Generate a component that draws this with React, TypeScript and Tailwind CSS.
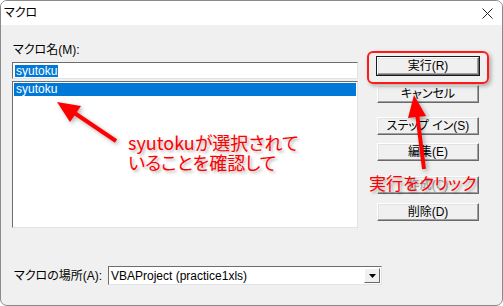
const ui = '[font-family:"Liberation_Sans","Noto_Sans_CJK_JP",sans-serif]';

function WinButton({ label, isDefault, disabled }: { label: string; isDefault?: boolean; disabled?: boolean }) {
  return (
    <div
      className={`h-[18px] w-full flex items-center justify-center bg-[#f0f0f0] border border-t-white border-l-white border-r-[#696969] border-b-[#696969] shadow-[inset_-1px_-1px_0_#a0a0a0,inset_1px_1px_0_#e3e3e3] text-[12px] leading-none [font-feature-settings:"palt"] ${isDefault ? 'outline outline-[#1a1a1a]' : ''} ${disabled ? 'text-[#a0a0a0]' : 'text-black'}`}
    >
      {label}
    </div>
  );
}

export default function App() {
  return (
    <div className={`relative w-[503px] h-[306px] overflow-hidden bg-[#f0f0f0] border border-[#8a8a8a] rounded-[7px] ${ui}`}>
      {/* title bar */}
      <div className="h-[24px] bg-white flex items-center justify-between pl-[3px] pr-[9px]">
        <span className="text-[12px] text-black [font-feature-settings:'palt']">マクロ</span>
        <svg width="11" height="11" viewBox="0 0 11 11">
          <path d="M0.5 0.5 L10.5 10.5 M10.5 0.5 L0.5 10.5" stroke="#222" strokeWidth="1" />
        </svg>
      </div>

      <div className="flex px-[11px]">
        {/* left column */}
        <div className="w-[346px] flex flex-col pt-[18px]">
          <div className="text-[12px] leading-[14px] text-black [font-feature-settings:'palt'] pl-[1px]">マクロ名(M):</div>
          <div className="mt-[5px] h-[17px] bg-white border border-t-[#6d6d6d] border-l-[#6d6d6d] border-r-[#e3e3e3] border-b-[#e3e3e3] flex items-center pl-[2px]">
            <span className="bg-[#0078d7] text-white text-[12px] leading-[12px] px-[1px]">syutoku</span>
          </div>
          <div className="mt-[2px] h-[147px] bg-white border border-t-[#6d6d6d] border-l-[#6d6d6d] border-r-[#e3e3e3] border-b-[#e3e3e3] p-[1px]">
            <div className="h-[13px] bg-[#0078d7] text-white text-[12px] leading-[13px] pl-[2px]">syutoku</div>
          </div>
        </div>

        {/* right column */}
        <div className="ml-[19px] w-[102px] flex flex-col pt-[32px]">
          <WinButton label="実行(R)" isDefault />
          <div className="mt-[10px]"><WinButton label="キャンセル" /></div>
          <div className="mt-[14px]"><WinButton label="ステップ イン(S)" /></div>
          <div className="mt-[8px]"><WinButton label="編集(E)" /></div>
          <div className="mt-[15px]"><WinButton label="作成(C)" disabled /></div>
          <div className="mt-[9px]"><WinButton label="削除(D)" /></div>
        </div>
      </div>

      {/* bottom row */}
      <div className="flex items-center mt-[38px] pl-[13px]">
        <div className="w-[94px] text-[12px] text-black [font-feature-settings:'palt']">マクロの場所(A):</div>
        <div className="w-[274px] h-[19px] bg-white border border-t-[#6d6d6d] border-l-[#6d6d6d] border-r-[#e3e3e3] border-b-[#e3e3e3] flex items-center justify-between pl-[2px] pr-[1px]">
          <span className="text-[12px] text-black">VBAProject (practice1xls)</span>
          <div className="w-[16px] h-[15px] bg-[#f0f0f0] border border-t-white border-l-white border-r-[#696969] border-b-[#696969] flex items-center justify-center">
            <svg width="7" height="4" viewBox="0 0 7 4"><path d="M0 0 H7 L3.5 4 Z" fill="#000" /></svg>
          </div>
        </div>
      </div>

      {/* annotations */}
      <div className="absolute left-[366px] top-[50px] w-[122px] h-[33px] border-2 border-[#ff1a1a] rounded-[6px] shadow-[2px_2px_4px_rgba(0,0,0,0.3)]" />
      <svg className="absolute left-0 top-0 [filter:drop-shadow(2px_2px_2px_rgba(0,0,0,0.3))]" width="503" height="306" viewBox="0 0 503 306">
        <line x1="115" y1="140" x2="72" y2="111" stroke="#ff0000" strokeWidth="4" />
        <path d="M56 101 L80 105 L69 121 Z" fill="#ff0000" />
        <line x1="423" y1="168" x2="416" y2="112" stroke="#ff0000" strokeWidth="4" />
        <path d="M413 94 L425 115 L407 117 Z" fill="#ff0000" />
      </svg>
      <div className="absolute left-[127px] top-[131px] text-[18px] leading-[20px] text-[#ff0000] [font-family:'Noto_Sans_CJK_JP',sans-serif] [font-feature-settings:'palt'] [text-shadow:2px_2px_3px_rgba(0,0,0,0.3)]">
        syutokuが選択されて
        <br />
        いることを確認して
      </div>
      <div className="absolute left-[368px] top-[170px] text-[17px] leading-[24px] text-[#ff0000] [font-family:'Noto_Sans_CJK_JP',sans-serif] [font-feature-settings:'palt'] [text-shadow:2px_2px_3px_rgba(0,0,0,0.3)]">
        実行をクリック
      </div>
    </div>
  );
}
